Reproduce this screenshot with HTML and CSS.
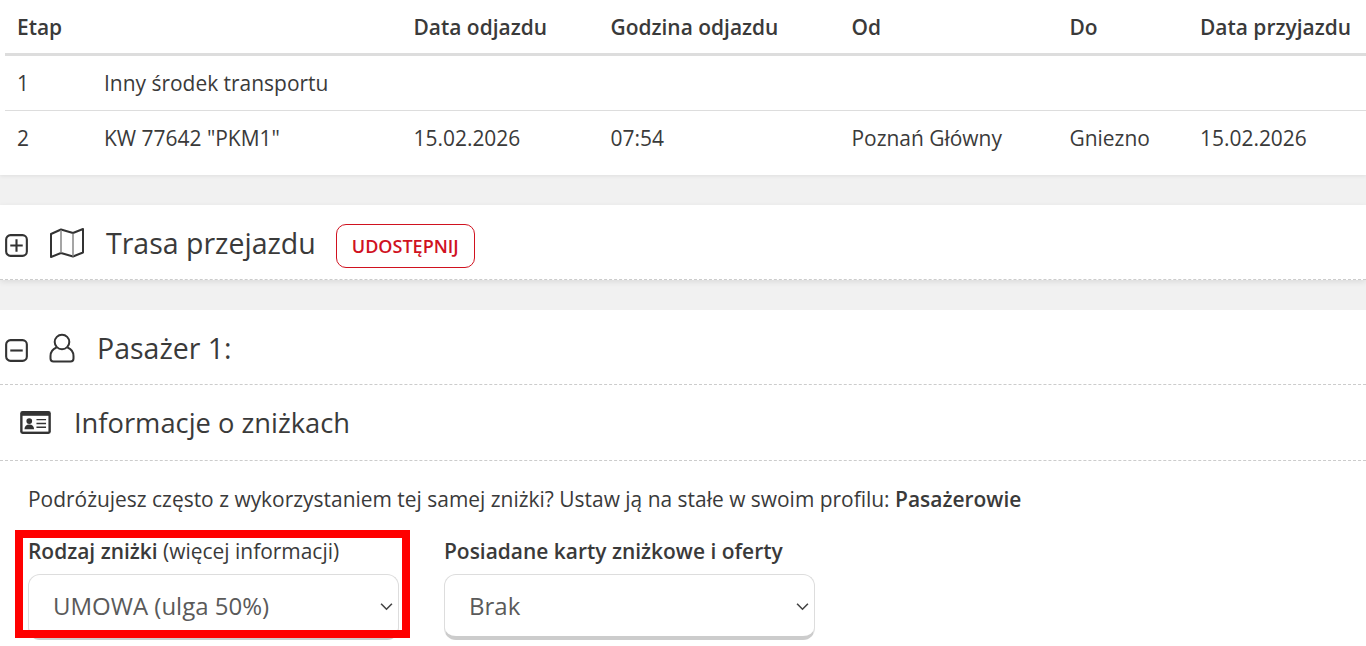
FILE: index.html
```html
<!DOCTYPE html>
<html lang="pl">
  <head>
    <meta charset="UTF-8" />
    <meta name="viewport" content="width=device-width, initial-scale=1.0" />
    <title>Pasażer</title>
    <link rel="stylesheet" href="styles.css">
  </head>
  <body>
    <section class="panel stages">
      <table class="stage-table">
        <thead>
          <tr>
            <th class="col-stage">Etap</th>
            <th class="col-train"></th>
            <th class="col-date">Data odjazdu</th>
            <th class="col-time">Godzina odjazdu</th>
            <th class="col-from">Od</th>
            <th class="col-to">Do</th>
            <th>Data przyjazdu</th>
          </tr>
        </thead>
        <tbody>
          <tr>
            <td>1</td>
            <td colspan="6">Inny środek transportu</td>
          </tr>
          <tr>
            <td>2</td>
            <td>KW 77642 "PKM1"</td>
            <td>15.02.2026</td>
            <td>07:54</td>
            <td>Poznań Główny</td>
            <td>Gniezno</td>
            <td>15.02.2026</td>
          </tr>
        </tbody>
      </table>
    </section>

    <section class="panel route">
      <div class="head route-head">
        <svg class="toggle" viewBox="0 0 24 24"><rect x="1.2" y="1.2" width="21.6" height="21.6" rx="4.5"/><path d="M12 5.5v13M5.5 12h13"/></svg>
        <svg class="map-icon" viewBox="0 0 34 30"><path d="M1 6 11 1.500 23 5l10-4v23.500L23 28.500 11 25 1 29z"/><path class="thin" d="M11 2v23M23 5.500v23"/></svg>
        <h2>Trasa przejazdu</h2>
        <button class="share">UDOSTĘPNIJ</button>
      </div>
    </section>

    <section class="panel passenger">
      <div class="head passenger-head">
        <svg class="toggle" viewBox="0 0 24 24"><rect x="1.2" y="1.2" width="21.6" height="21.6" rx="4.5"/><path d="M5.500 12h13"/></svg>
        <svg class="user-icon" viewBox="0 0 26 30"><circle cx="13" cy="9" r="7.300"/><path d="M7.500 14.500C4 16 1.500 19 1.500 23v2.500c0 1.800 1.200 3 3 3h17c1.800 0 3-1.200 3-3V23c0-4-2.500-7-6-8.500"/></svg>
        <h2>Pasażer 1:</h2>
      </div>
      <div class="head info-head">
        <svg class="card-icon" viewBox="0 0 32 24"><rect width="32" height="24" rx="2.500" fill="#333"/><rect x="2.500" y="5" width="27" height="16.500" fill="#fff"/><circle cx="9.500" cy="10.500" r="3" fill="#333"/><path d="M4.500 19c0-3.500 2-5 5-5s5 1.500 5 5z" fill="#333"/><path class="lines" d="M17 9h10M17 13h10M17 17h10"/></svg>
        <h3>Informacje o zniżkach</h3>
      </div>
      <p class="hint">Podróżujesz często z wykorzystaniem tej samej zniżki? Ustaw ją na stałe w swoim profilu: <b>Pasażerowie</b></p>
      <div class="fields">
        <div class="field field-type">
          <label for="discount"><b>Rodzaj zniżki</b> (więcej informacji)</label>
          <div class="select-wrap">
            <select id="discount"><option>UMOWA (ulga 50%)</option></select>
            <svg class="chevron" viewBox="0 0 12 8"><path d="M1 1.500 6 6.500 11 1.500"/></svg>
          </div>
          <div class="highlight"></div>
        </div>
        <div class="field field-cards">
          <label for="cards"><b>Posiadane karty zniżkowe i oferty</b></label>
          <div class="select-wrap">
            <select id="cards"><option>Brak</option></select>
            <svg class="chevron" viewBox="0 0 12 8"><path d="M1 1.500 6 6.500 11 1.500"/></svg>
          </div>
        </div>
      </div>
    </section>
  </body>
</html>
```

FILE: styles.css
```css
html,
body {
  height: 646px;
  overflow: hidden;
}

body {
  margin: 0;
  background-color: #f1f1f1;
  color: #3a3a3a;
  font-family: "Open Sans", "Liberation Sans", sans-serif;
  font-size: 20.95px;
}

.panel {
  background-color: #fff;
}

.stages {
  height: 175px;
  padding-left: 5px;
  box-sizing: border-box;
  box-shadow: 0 1px 4px rgba(0, 0, 0, 0.08);
}

.stage-table {
  width: 1361px;
  border-collapse: collapse;
  table-layout: fixed;
}

.stage-table th {
  height: 53px;
  padding: 0 0 0 12px;
  border-bottom: 3px solid #ddd;
  text-align: left;
  font-weight: 600;
  white-space: nowrap;
}

.stage-table td {
  height: 54px;
  padding: 0 0 0 12px;
  white-space: nowrap;
}

.stage-table tbody tr:first-child td {
  border-bottom: 1px solid #ddd;
}

.col-stage {
  width: 75px;
}

.col-train {
  width: 297.5px;
}

.col-date {
  width: 185px;
}

.col-time {
  width: 229px;
}

.col-from {
  width: 206px;
}

.col-to {
  width: 118.5px;
}

.route {
  margin-top: 30px;
  border-bottom: 1px dashed #ccc;
  height: 74px;
  box-shadow: 0 2px 6px rgba(0, 0, 0, 0.09);
}

.passenger {
  margin-top: 30px;
  height: 336px;
}

.head {
  display: flex;
  align-items: center;
}

.route-head {
  height: 74px;
  padding-left: 5px;
}

.passenger-head {
  height: 74px;
  padding-left: 5px;
  border-bottom: 1px dashed #ccc;
}

.info-head {
  height: 75px;
  padding-left: 20px;
  border-bottom: 1px dashed #ccc;
}

h2 {
  margin: 2px 0 0;
  font-size: 28.5px;
  font-weight: 400;
}

h3 {
  margin: 0 0 0 23px;
  font-size: 27.3px;
  font-weight: 400;
}

.toggle {
  width: 23px;
  height: 23px;
  margin-top: 6px;
  fill: none;
  stroke: #333;
  stroke-width: 2.200;
}

.map-icon {
  width: 34px;
  height: 30px;
  margin-left: 22px;
  margin-right: 22px;
  margin-top: 2px;
  fill: none;
  stroke: #333;
  stroke-width: 2;
  stroke-linejoin: round;
}

.map-icon .thin {
  stroke: #888;
  stroke-width: 1.500;
}

.user-icon {
  width: 26px;
  height: 30px;
  margin-left: 21px;
  margin-right: 22px;
  margin-top: 2px;
  fill: none;
  stroke: #333;
  stroke-width: 2;
}

.card-icon {
  width: 31px;
  height: 23px;
}

.card-icon .lines {
  fill: none;
  stroke: #333;
  stroke-width: 1.500;
}

.share {
  height: 44px;
  width: 139px;
  margin-left: 20px;
  margin-top: 8px;
  padding: 0;
  background-color: #fff;
  border: 1px solid #d0121f;
  border-radius: 10px;
  color: #d0121f;
  font-family: inherit;
  font-size: 18px;
  font-weight: 600;
}

.hint {
  margin: 0;
  padding: 25px 0 0 28px;
  height: 27px;
  line-height: 27px;
}

b {
  font-weight: 600;
}

.fields {
  display: flex;
  gap: 45px;
  padding: 25px 0 0 28px;
}

.field {
  position: relative;
  width: 371px;
}

.field label {
  display: block;
  height: 27px;
  line-height: 27px;
  margin-bottom: 9px;
  white-space: nowrap;
}

.select-wrap {
  position: relative;
}

.select-wrap select {
  display: block;
  width: 371px;
  height: 66px;
  padding: 0 0 0 24px;
  appearance: none;
  background-color: #fff;
  border: 1px solid #ddd;
  border-bottom: 4px solid #ccc;
  border-radius: 12px;
  color: #5a5a5a;
  font-family: inherit;
  font-size: 24px;
}

.chevron {
  position: absolute;
  right: 6px;
  top: 28px;
  width: 13px;
  height: 9px;
  fill: none;
  stroke: #444;
  stroke-width: 1.500;
}

/* red box drawn over the first field */
.highlight {
  position: absolute;
  left: -13px;
  top: -8px;
  width: 379px;
  height: 92px;
  border: 8px solid #f00;
}
```
